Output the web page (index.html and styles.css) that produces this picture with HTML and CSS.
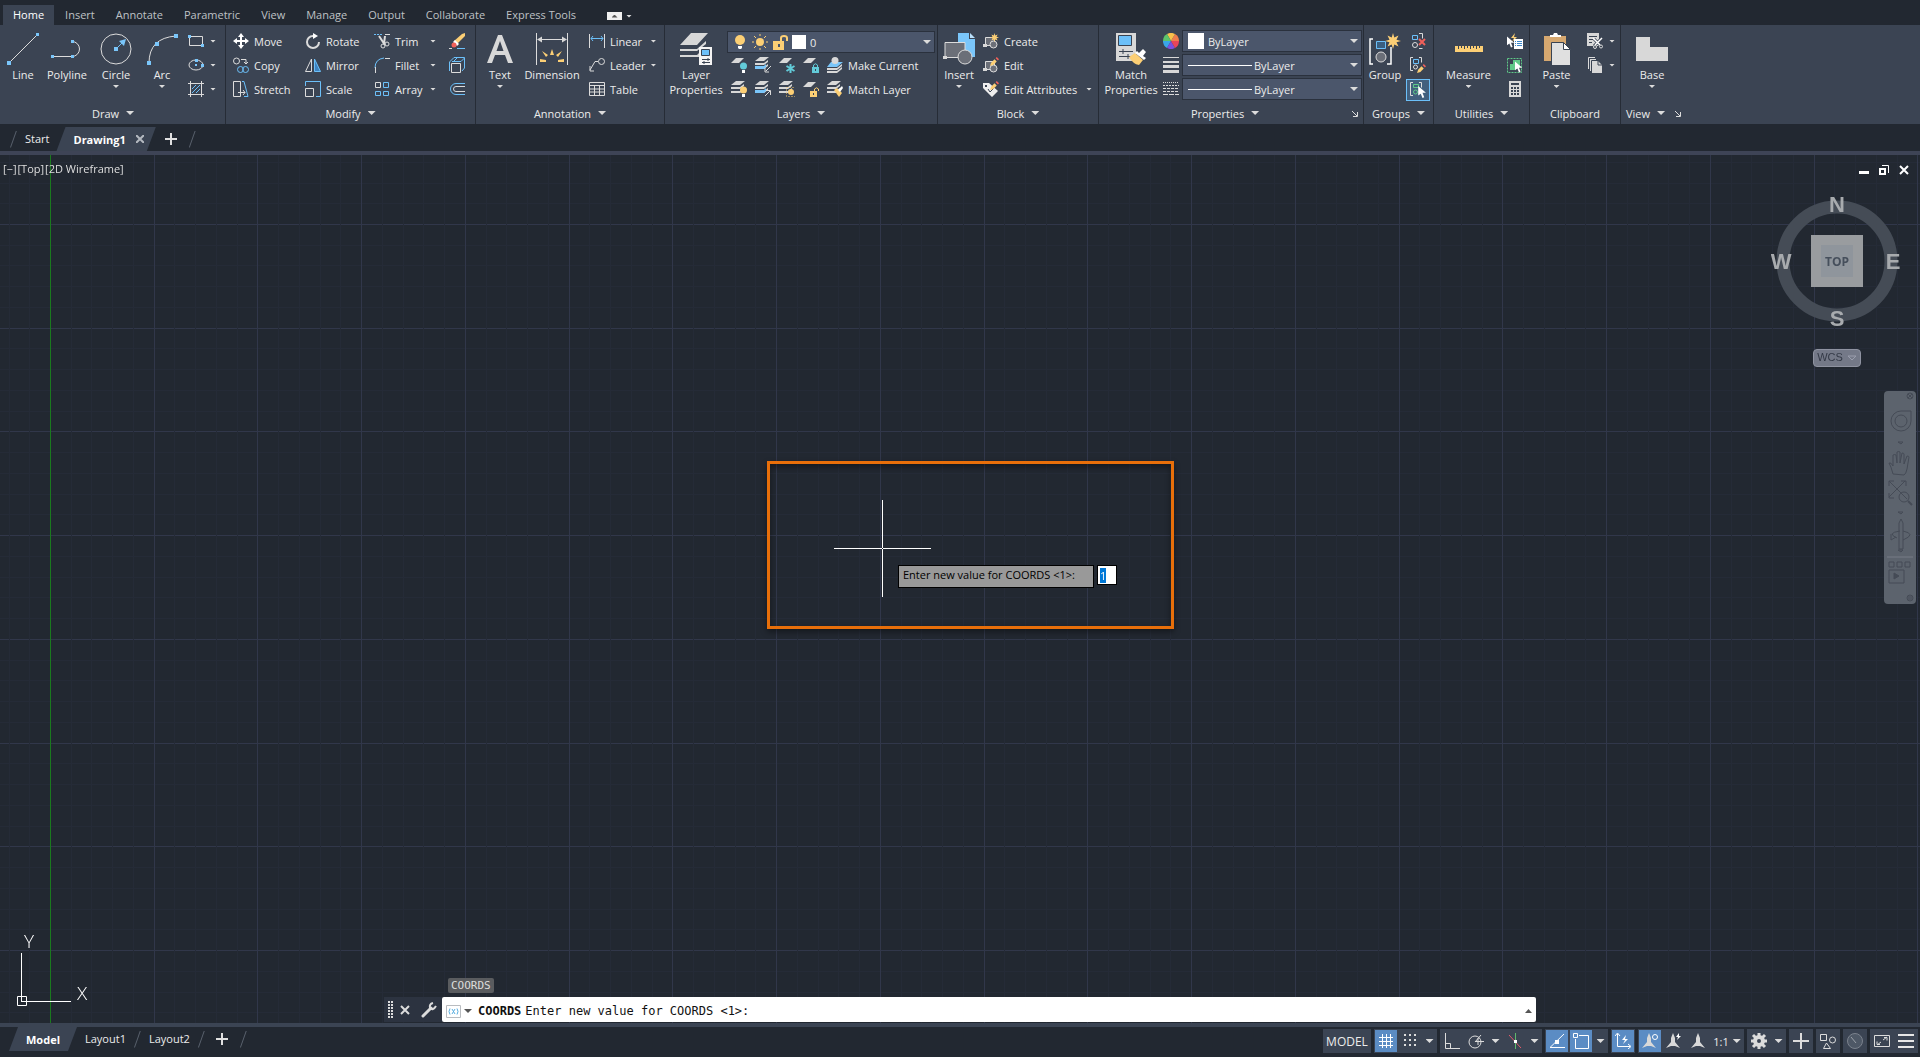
FILE: index.html
```
<!DOCTYPE html>
<html lang="en">
<head>
  <meta charset="UTF-8">
  <meta name="viewport" content="width=device-width, initial-scale=1.0">
  <title>Drawing1</title>
  <link rel="stylesheet" href="styles.css">
</head>
<body>
  <!-- Shared icon parts -->
  <svg class="defs" width="0" height="0" aria-hidden="true">
    <symbol id="slab" viewBox="0 0 16 16"><path class="fg" d="M5 1h8L8 6H0z"/></symbol>
    <symbol id="stack" viewBox="0 0 16 16"><path class="fg" d="M5 0h9L9 4H0zM0 6h9l4-3v2L9 8H0zM0 10h9l4-3v2l-4 3H0z"/></symbol>
    <symbol id="pointer" viewBox="0 0 10 14"><path fill="#fff" d="M0 0v11l3-2 2 5 2-1-2-5h4z"/></symbol>
    <symbol id="pencil" viewBox="0 0 8 8"><path class="yw" d="M0 8l1-3 3-3 2 2-3 3z"/><path class="rd" d="M5 1l1-1 2 2-1 1z"/></symbol>
    <symbol id="star" viewBox="0 0 16 16"><path class="yw" d="M8 0l1.300 4.500L13.500 2.500 11.500 6.700 16 8l-4.500 1.300 2 4.200-4.200-2L8 16l-1.300-4.500-4.200 2 2-4.200L0 8l4.500-1.300-2-4.200 4.200 2z"/></symbol>
    <symbol id="blockpart" viewBox="0 0 16 16"><path class="ln dim" d="M2.500 4.500h9v8h-9z"/><path class="fg" d="M0 11h4v3H0z"/><circle class="ln dim" cx="10.500" cy="11.500" r="3.500"/></symbol>
    <symbol id="compass" viewBox="0 0 16 16"><path class="fg" d="M8 0l2 5v4l5 6-5-2H6l-5 2 5-6V5z"/></symbol>
  </svg>

  <header>
    <nav class="menu">
      <a class="active" href="#">Home</a>
      <a href="#">Insert</a>
      <a href="#">Annotate</a>
      <a href="#">Parametric</a>
      <a href="#">View</a>
      <a href="#">Manage</a>
      <a href="#">Output</a>
      <a href="#">Collaborate</a>
      <a href="#">Express Tools</a>
      <button class="ribbon-toggle" aria-label="Minimize ribbon"><span><i class="up"></i></span><i class="caret"></i></button>
    </nav>

    <div class="ribbon">
      <!-- Draw -->
      <section class="panel draw">
        <div class="body">
          <button class="big"><svg viewBox="0 0 32 32"><path class="ln" d="M2 30L30 2"/><path class="bl" d="M0 28h4v4H0zM29 0h3v3h-3z"/></svg>Line</button>
          <button class="big"><svg viewBox="0 0 32 32"><path class="ln" d="M2 23.500h19a7 7 0 0 0 0-15"/><path class="bl" d="M0 22h3v3H0zM20 22h3v3h-3zM20 7h3v3h-3z"/></svg>Polyline</button>
          <button class="big"><svg viewBox="0 0 32 32"><circle class="ln" cx="16" cy="16" r="15"/><path class="lb" d="M16 16l8-8"/><path class="bl" d="M14 14h4v4h-4zM19 8l7-2-2 7z"/></svg>Circle<i class="caret"></i></button>
          <button class="big"><svg viewBox="0 0 32 32"><path class="ln" d="M3 30Q3 5 30 3"/><path class="bl" d="M1 28h4v4H1zM28 1h4v4h-4zM9 9h4v4H9z"/></svg>Arc<i class="caret"></i></button>
          <div class="rows">
            <button class="small" aria-label="Rectangle"><svg viewBox="0 0 16 16"><path class="ln" d="M1.500 3.500h13v9h-13z"/><path class="bl" d="M0 2h3v3H0zM13 11h3v3h-3z"/></svg><i class="caret"></i></button>
            <button class="small" aria-label="Ellipse"><svg viewBox="0 0 16 16"><ellipse class="ln" cx="8" cy="8" rx="7" ry="5"/><path class="bl" d="M7 2h3v3H7zM7 7h2v2H7zM13 7h3v3h-3z"/></svg><i class="caret"></i></button>
            <button class="small" aria-label="Hatch"><svg viewBox="0 0 16 16"><path class="ln" d="M0 2.500h16M0 13.500h16M2.500 0v16M13.500 0v16"/><path class="lb" d="M4 8l4-4M4 12l8-8M8 12l4-4"/></svg><i class="caret"></i></button>
          </div>
        </div>
        <h2>Draw<i class="caret wide"></i></h2>
      </section>

      <!-- Modify -->
      <section class="panel modify">
        <div class="body">
          <button class="small"><svg viewBox="0 0 16 16"><path fill="#fff" d="M8 0l3 4H9v3h3V5l4 3-4 3V9H9v3h2l-3 4-3-4h2V9H4v2L0 8l4-3v2h3V4H5z"/></svg>Move</button>
          <button class="small"><svg viewBox="0 0 16 16"><path class="ln thick" d="M9 3H8a6 6 0 1 0 6 6"/><path fill="#fff" d="M8 0l5 3-5 3z"/></svg>Rotate</button>
          <button class="small"><svg viewBox="0 0 16 16"><path class="lb" stroke-dasharray="2 1" d="M0 1.500h9"/><path class="ln" d="M11 1.500h5"/><path class="ln thick" d="M5 3l6 9M11 3l-1 8"/><circle class="ln" cx="9" cy="13" r="2"/><circle class="ln" cx="13" cy="11" r="2"/></svg>Trim<i class="caret"></i></button>
          <button class="small" aria-label="Erase"><svg viewBox="0 0 16 16"><path class="yw" d="M5 8l8-7 3-1v3l-8 8z"/><path fill="#fff" d="M4 9l2-2 4 4-2 2z"/><circle class="rd" cx="5" cy="12" r="2.500"/><path class="ln" d="M0 15.500h3"/><path class="lb" d="M8 15.500h8"/></svg></button>

          <button class="small"><svg viewBox="0 0 16 16"><circle class="ln" cx="3.500" cy="4" r="3"/><path class="ln" d="M8 2.500h5v4M11 5l2 2 2-2"/><circle class="lb" cx="7.500" cy="12.500" r="3"/><circle class="lb" cx="12.500" cy="12.500" r="3"/></svg>Copy</button>
          <button class="small"><svg viewBox="0 0 16 16"><path class="ln" d="M6.500 2v12.500h-6z"/><path class="lb fill" d="M9.500 2v12.500h6z"/></svg>Mirror</button>
          <button class="small"><svg viewBox="0 0 16 16"><path class="lb" d="M1 11q0-9 9-10"/><path class="ln" d="M11 1.500h5M1.500 10v6"/></svg>Fillet<i class="caret"></i></button>
          <button class="small" aria-label="Explode"><svg viewBox="0 0 16 16"><path class="ln" d="M2.500 6.500h9v9h-9z"/><path class="lb" d="M.500 14V5L5 .500h10.500V11L13 14M3 4.500h9L15.500 1M8 1L5 4"/></svg></button>

          <button class="small"><svg viewBox="0 0 16 16"><path class="ln" d="M.5.500h7v15h-7zM5 11.500h7M10 9l2 2.500-2 2.500"/><path class="lb" d="M9 .500h2l4 15h-4"/></svg>Stretch</button>
          <button class="small"><svg viewBox="0 0 16 16"><path class="lb" d="M.500 5V.500h15v15H11"/><path class="ln" d="M.500 7.500h8v8h-8z"/></svg>Scale</button>
          <button class="small"><svg viewBox="0 0 16 16"><path class="ln" d="M1.500 1.500h5v5h-5z"/><path class="lb" d="M9.500 1.500h5v5h-5zM1.500 10.500h5v4h-5zM9.500 10.500h5v4h-5z"/></svg>Array<i class="caret"></i></button>
          <button class="small" aria-label="Offset"><svg viewBox="0 0 16 16"><path class="lb" d="M16 2.500H7a5.500 5.500 0 0 0 0 11h9"/><path class="ln" d="M16 5.500H7a2.500 2.500 0 0 0 0 5h9"/></svg></button>
        </div>
        <h2>Modify<i class="caret wide"></i></h2>
      </section>

      <!-- Annotation -->
      <section class="panel annotation">
        <div class="body">
          <button class="big"><svg viewBox="0 0 32 32"><path class="fg" fill-rule="evenodd" d="M3 30L14 2h4l11 28h-5l-3-8H11l-3 8zM12.500 18h7L16 8z"/></svg>Text<i class="caret"></i></button>
          <button class="big"><svg viewBox="0 0 32 32"><path class="ln" d="M.500 0v32M31.500 0v32M2 6.500h28"/><path class="fg" d="M1 6.500l5-3v6zM31 6.500l-5-3v6z"/><path class="yw" d="M16 16l2 6h-4zM6 18l6 4-2 2zM26 18l-6 4 2 2zM4 26l6 1v2H4zM28 26l-6 1v2h6z"/></svg>Dimension</button>
          <div class="rows">
            <button class="small"><svg viewBox="0 0 16 16"><path class="ln" d="M.500 1v14M15.500 1v14"/><path class="lb" d="M2 5.500h12M4 3L2 5.500 4 8M12 3l2 2.500L12 8"/></svg>Linear<i class="caret"></i></button>
            <button class="small"><svg viewBox="0 0 16 16"><circle class="ln" cx="12.500" cy="4.500" r="3"/><path class="ln" d="M9 4.500H6L1 13M1 9v5h4"/></svg>Leader<i class="caret"></i></button>
            <button class="small"><svg viewBox="0 0 16 16"><path class="ln" d="M.500 1.500h15v13H.500zM.500 4.500h15M.500 8h15M.500 11h15M5.500 4.500v10M10.500 4.500v10"/></svg>Table</button>
          </div>
        </div>
        <h2>Annotation<i class="caret wide"></i></h2>
      </section>

      <!-- Layers -->
      <section class="panel layers">
        <div class="body">
          <button class="big"><svg viewBox="0 0 32 32"><path class="fg" d="M11 0h17L17 12H0zM0 16h17l9-8v3l-9 7H0zM0 22h17l3-3v5H0z"/><path fill="#f4f4f4" d="M19 14h13v18H19z"/><path fill="#6cc0f9" stroke="#394352" d="M21.500 16.500h8v6h-8z"/><path stroke="#394352" fill="none" d="M22 26.500h8M22 29.500h8M28 25v3M24 28v3"/></svg>Layer<br>Properties</button>
          <div class="rows">
            <div class="combo">
              <svg viewBox="0 0 16 16"><circle class="yw" cx="8" cy="6" r="5"/><path fill="#fff" d="M6 12h4v2l-1 1H7l-1-1z"/></svg>
              <svg viewBox="0 0 16 16"><circle class="yw" cx="8" cy="8" r="4"/><path stroke="#fccf75" fill="none" d="M8 0v2M8 14v2M0 8h2M14 8h2M2 2l2 2M12 12l2 2M14 2l-2 2M4 12l-2 2"/></svg>
              <svg viewBox="0 0 16 16"><path class="yw" fill-rule="evenodd" d="M1 7h11v9H1zM6 10v3h2v-3z"/><path fill="none" stroke="#fccf75" stroke-width="2" d="M9 7V4q0-2 3-2t3 2v3"/></svg>
              <i class="swatch"></i>
              <select aria-label="Layer"><option>0</option></select>
              <i class="caret wide"></i>
            </div>
            <div class="icons">
              <button aria-label="Off"><svg viewBox="0 0 16 16"><use href="#slab"/><circle class="cy" cx="12.500" cy="9" r="3.500"/><path fill="#fff" d="M11 13h3v3h-3z"/></svg></button>
              <button aria-label="Isolate"><svg viewBox="0 0 16 16"><use href="#stack"/><path class="bl" d="M0 9h9l2-2v3l-2 2H0z"/><path class="ln" d="M16 9l-5 5M10 11v4h4"/></svg></button>
              <button aria-label="Freeze"><svg viewBox="0 0 16 16"><use href="#slab"/><path fill="none" stroke="#62cbd9" stroke-width="2" d="M11.500 7v9M7.500 9l8 5M15.500 9l-8 5"/></svg></button>
              <button aria-label="Lock"><svg viewBox="0 0 16 16"><use href="#slab"/><path class="cy" fill-rule="evenodd" d="M9 10h7v6H9zM12 12v2h1v-2z"/><path fill="none" stroke="#62cbd9" d="M10.500 10V8q2-2.500 4 0v2"/></svg></button>
              <button class="label"><svg viewBox="0 0 16 16"><path class="fg" d="M0 14h10l5-4v2l-5 4H0zM0 11h10l5-4v2l-5 4H0z"/><path class="bl" d="M4 5h12l-6 5H0z"/><circle class="fg" cx="8" cy="3.500" r="3.500"/></svg>Make Current</button>
            </div>
            <div class="icons">
              <button aria-label="Turn all on"><svg viewBox="0 0 16 16"><use href="#stack"/><circle class="yw" cx="12.500" cy="9" r="3.500"/><path fill="#fff" d="M11 13h3v3h-3z"/></svg></button>
              <button aria-label="Unisolate"><svg viewBox="0 0 16 16"><use href="#stack"/><path class="bl" d="M0 9h9l2-2v3l-2 2H0z"/><path class="ln" d="M10 15l5-5M11 9.500h4.500V14"/></svg></button>
              <button aria-label="Thaw all"><svg viewBox="0 0 16 16"><use href="#stack"/><circle class="yw" cx="12" cy="11" r="3"/><path fill="none" stroke="#fccf75" stroke-dasharray="1 2" d="M7.500 6.500h9v9h-9z"/></svg></button>
              <button aria-label="Unlock"><svg viewBox="0 0 16 16"><use href="#slab"/><path class="yw" fill-rule="evenodd" d="M7 10h7v6H7zM10 12v2h1v-2z"/><path fill="none" stroke="#fccf75" d="M11.500 10V8q2-2.500 4 0v2"/></svg></button>
              <button class="label"><svg viewBox="0 0 16 16"><use href="#stack"/><path class="yw" d="M7 9l3-2 5 5-3 4z"/><path fill="#fff" d="M11 9l4-4 1 2-3 4z"/></svg>Match Layer</button>
            </div>
          </div>
        </div>
        <h2>Layers<i class="caret wide"></i></h2>
      </section>

      <!-- Block -->
      <section class="panel block">
        <div class="body">
          <button class="big"><svg viewBox="0 0 32 32"><path class="bl" d="M15 0h11v6h6v18H15z"/><path fill="#b9e0fb" d="M27 0l5 5h-5z"/><path class="ln dim" d="M2 9.500h20v15H2z"/><path class="fg" d="M0 23h4v3H0z"/><circle class="ln dim" cx="22" cy="24" r="7"/></svg>Insert<i class="caret"></i></button>
          <div class="rows">
            <button class="small"><svg viewBox="0 0 16 16"><use href="#blockpart"/><use href="#star" x="7" y="0" width="9" height="9"/></svg>Create</button>
            <button class="small"><svg viewBox="0 0 16 16"><use href="#blockpart"/><use href="#pencil" x="7" y="0" width="9" height="9"/></svg>Edit</button>
            <button class="small"><svg viewBox="0 0 16 16"><path fill="#eee" fill-rule="evenodd" d="M0 2h6l9 8-6 6-9-9zM2 4v2h2V4z"/><path stroke="#394352" fill="none" d="M5 8l2 3 5-5"/><use href="#pencil" x="7" y="0" width="9" height="9"/></svg>Edit Attributes<i class="caret"></i></button>
          </div>
        </div>
        <h2>Block<i class="caret wide"></i></h2>
      </section>

      <!-- Properties -->
      <section class="panel properties">
        <div class="body">
          <button class="big"><svg viewBox="0 0 32 32"><path class="fg" d="M1 0h20v28H1z"/><path fill="#6cc0f9" stroke="#394352" d="M3.500 2.500h13v10h-13z"/><path stroke="#394352" fill="none" d="M4 18.500h14M4 23.500h14M8 16v5M13 21v5"/><path class="yw" d="M14 24l6-4 8 7-4 5q-6-1-10-8z"/><path fill="#fff" d="M20 20l2-2 2 2 4-4 3 3-3 4 3 2-2 2z"/></svg>Match<br>Properties</button>
          <div class="rows">
            <div class="field">
              <svg viewBox="0 0 16 16"><path fill="#ef7d4c" d="M8 8L16 8A8 8 0 0 0 12 1z"/><path fill="#f8c04c" d="M8 8l4-7a8 8 0 0 0-8 0z"/><path fill="#5cc46a" d="M8 8L4 1a8 8 0 0 0-4 7z"/><path fill="#3aa5e8" d="M8 8H0a8 8 0 0 0 4 7z"/><path fill="#7a4fe0" d="M8 8l-4 7a8 8 0 0 0 8 0z"/><path fill="#e8455a" d="M8 8l4 7a8 8 0 0 0 4-7z"/></svg>
              <div class="combo"><i class="swatch big-swatch"></i><select aria-label="Object color"><option>ByLayer</option></select><i class="caret wide"></i></div>
            </div>
            <div class="field">
              <svg viewBox="0 0 16 16"><path class="fg" d="M0 0h16v1H0zM0 4h16v2H0zM0 8h16v3H0zM0 13h16v3H0z"/></svg>
              <div class="combo"><i class="line"></i><select aria-label="Lineweight"><option>ByLayer</option></select><i class="caret wide"></i></div>
            </div>
            <div class="field">
              <svg viewBox="0 0 16 16"><path class="ln" stroke-dasharray="1 1" d="M0 1.500h16"/><path class="ln" stroke-dasharray="2 1" d="M0 4.500h16"/><path class="ln" stroke-dasharray="3 1" d="M0 7.500h16M0 10.500h16"/><path class="ln" stroke-dasharray="5 1" d="M0 13.500h16"/></svg>
              <div class="combo"><i class="line"></i><select aria-label="Linetype"><option>ByLayer</option></select><i class="caret wide"></i></div>
            </div>
          </div>
        </div>
        <h2>Properties<i class="caret wide"></i><button class="launcher" aria-label="Properties palette"><svg viewBox="0 0 6 6"><path class="ln" d="M0 0l5 5M5.500 1v4.500H1"/></svg></button></h2>
      </section>

      <!-- Groups -->
      <section class="panel groups">
        <div class="body">
          <button class="big"><svg viewBox="0 0 32 32"><path fill="none" stroke="#fff" stroke-width="1.500" d="M4 6H1v25h3M18 31h4V14"/><path fill="#3a5f80" stroke="#6cc0f9" d="M7.500 8.500h9v7h-9z"/><circle class="ln dim" cx="12" cy="24" r="5"/><use href="#star" x="16" y="0" width="16" height="16"/></svg>Group</button>
          <div class="rows">
            <button class="small" aria-label="Ungroup"><svg viewBox="0 0 16 16"><path class="lb" d="M2.500 2.500h5v4h-5z"/><circle class="ln" cx="5" cy="12" r="2.500"/><path class="ln" d="M9 .500h3.500v5M9 15.500h3.500"/><path fill="none" stroke="#f1605a" stroke-width="2" d="M9 6l6 6M15 6l-6 6"/></svg></button>
            <button class="small" aria-label="Group edit"><svg viewBox="0 0 16 16"><path class="ln" d="M3 .500H.500v13H3M9 .500h2.500v5"/><path class="lb" d="M3.500 2.500h5v4h-5z"/><circle class="ln" cx="5.500" cy="10" r="2"/><use href="#pencil" x="7" y="7" width="9" height="9"/></svg></button>
            <button class="small on" aria-label="Group selection"><svg viewBox="0 0 16 16"><path class="ln" d="M3 .500H.500v13H3M9 .500h2.500v5"/><path class="lg" d="M3.500 2.500h5v3h-5z"/><circle class="lg" cx="5.500" cy="10" r="2"/><use href="#pointer" x="8" y="4" width="9" height="12"/></svg></button>
          </div>
        </div>
        <h2>Groups<i class="caret wide"></i></h2>
      </section>

      <!-- Utilities -->
      <section class="panel utilities">
        <div class="body">
          <button class="big"><svg viewBox="0 0 32 32"><path class="yw" d="M2 13h28v6H2z"/><path stroke="#394352" fill="none" d="M5.500 13v3M8.500 13v2M11.500 13v3M14.500 13v2M17.500 13v3M20.500 13v2M23.500 13v3M26.500 13v2"/></svg>Measure<i class="caret"></i></button>
          <div class="rows">
            <button class="small" aria-label="Quick select"><svg viewBox="0 0 16 16"><path class="yw" d="M8 0L4 5h3L5 9l5-5H7z"/><path fill="#fff" d="M7 6h9v10H7z"/><path fill="none" stroke="#3a86c8" d="M8 8.500h1M10 8.500h5M8 10.500h1M10 10.500h5M8 12.500h1M10 12.500h5"/><use href="#pointer" x="0" y="3" width="8" height="12"/></svg></button>
            <button class="small" aria-label="Select all"><svg viewBox="0 0 16 16"><path class="lg" stroke-dasharray="2 1" d="M.500 1.500h14v14H.500z"/><path fill="#5fc988" d="M6 3h7v7H8v3H3V7h3z"/><use href="#pointer" x="8" y="4" width="8" height="12"/></svg></button>
            <button class="small" aria-label="Calculator"><svg viewBox="0 0 16 16"><path class="fg" d="M2 0h12v16H2z"/><path fill="#394352" d="M4 2h8v2H4zM4 6h2v2H4zM7 6h2v2H7zM10 6h2v2h-2zM4 9h2v2H4zM7 9h2v2H7zM10 9h2v2h-2zM4 12h2v2H4zM7 12h2v2H7zM10 12h2v2h-2z"/></svg></button>
          </div>
        </div>
        <h2>Utilities<i class="caret wide"></i></h2>
      </section>

      <!-- Clipboard -->
      <section class="panel clipboard">
        <div class="body">
          <button class="big"><svg viewBox="0 0 32 32"><path fill="#d6a870" d="M3 3h22v25H3z"/><path fill="#fff" d="M9 4V2h3l1-2h3l1 2h3v2z"/><path fill="#e0e0e0" stroke="#394352" d="M10.500 9.500h12l7 7v16h-19z"/><path fill="#fff" stroke="#394352" d="M22.500 9.500v7h7z"/></svg>Paste<i class="caret"></i></button>
          <div class="rows">
            <button class="small" aria-label="Cut"><svg viewBox="0 0 16 16"><path class="fg" d="M0 0h12v13H0z"/><path stroke="#394352" fill="none" d="M2 3.500h8M2 6.500h4M2 9.500h3"/><path fill="none" stroke="#394352" stroke-width="3" d="M7 6l7 7M14 6l-7 7"/><path fill="none" stroke="#fff" stroke-width="1.500" d="M6 5l7 7M15 5l-7 7"/><circle class="ln" cx="8" cy="14" r="1.500"/><circle class="ln" cx="14" cy="13.500" r="1.500"/></svg><i class="caret"></i></button>
            <button class="small" aria-label="Copy clip"><svg viewBox="0 0 16 16"><path class="ln" d="M1.500 12V.500H8"/><path class="fg" d="M3 2h6v3H6v9H3zM5 4h6l4 4v8H5z"/><path stroke="#394352" fill="none" d="M4.500 16V3.500h7M11 4v4h4"/></svg><i class="caret"></i></button>
          </div>
        </div>
        <h2>Clipboard</h2>
      </section>

      <!-- View -->
      <section class="panel view">
        <div class="body">
          <button class="big"><svg viewBox="0 0 32 32"><path class="fg" d="M0 4h14v10h18v14H0z"/></svg>Base<i class="caret"></i></button>
        </div>
        <h2>View<i class="caret wide"></i><button class="launcher" aria-label="View settings"><svg viewBox="0 0 6 6"><path class="ln" d="M0 0l5 5M5.500 1v4.500H1"/></svg></button></h2>
      </section>
    </div>

    <nav class="tabs files">
      <i class="slash"></i>
      <a href="#">Start</a>
      <a class="active" href="#">Drawing1 <svg viewBox="0 0 8 8"><path fill="none" stroke="#b4b9c0" stroke-width="2" d="M0 0l8 8M8 0L0 8"/></svg></a>
      <button class="plus" aria-label="New drawing"></button>
      <i class="slash"></i>
    </nav>
  </header>

  <main id="viewport">
    <canvas id="grid"></canvas>

    <div class="view-label"><button>[−]</button><button>[Top]</button><button>[2D Wireframe]</button></div>

    <div class="win-controls">
      <button aria-label="Minimize"><svg viewBox="0 0 10 10"><path fill="#fff" d="M0 6h10v3H0z"/></svg></button>
      <button aria-label="Restore"><svg viewBox="0 0 10 10"><path fill="none" stroke="#fff" stroke-width="2" d="M1 4h5v5H1z"/><path fill="none" stroke="#fff" d="M3 .500h6.500V8"/></svg></button>
      <button aria-label="Close"><svg viewBox="0 0 10 10"><path fill="none" stroke="#fff" stroke-width="2" d="M1 1l8 8M9 1L1 9"/></svg></button>
    </div>

    <div class="viewcube">
      <svg viewBox="0 0 132 132">
        <circle cx="66" cy="66" r="54" fill="none" stroke="#454c56" stroke-width="13"/>
        <path fill="#999c9f" d="M40 40h52v52H40z"/>
        <path fill="#8f959c" d="M50 50h32v32H50z"/>
        <g class="dirs"><text x="66" y="17">N</text><text x="66" y="131">S</text><text x="10" y="74">W</text><text x="122" y="74">E</text></g>
        <text class="face" x="66" y="71">TOP</text>
      </svg>
      <button class="wcs">WCS<svg viewBox="0 0 10 6"><path fill="none" stroke="#9a9ead" d="M1 1h8L5 5z"/></svg></button>
    </div>

    <div class="navbar">
      <svg viewBox="0 0 32 213">
        <g fill="none" stroke="#454b56">
          <circle cx="26" cy="5" r="3"/><path d="M24 3l4 4M28 3l-4 4"/>
          <path d="M17 20h10v10a10 10 0 1 1-10-10z"/><circle cx="17" cy="30" r="6"/>
          <path d="M14 51h5l-2 2z"/>
          <path d="M9 83q-2-8-4-11 2-1 4 3V64q2-1 3 0l1 8V61q2-1 3 0v11l2-10q2 0 2 1v10l3-8q2 0 2 1l-2 12q-1 5-3 6z"/>
          <path d="M5 90l18 18M21 90L5 106M5 95v-5h5M17 90h5v5M5 102v5h5"/><circle cx="20" cy="106" r="5"/><path stroke-width="2" d="M24 110l4 4"/>
          <path d="M14 121h5l-2 2z"/>
          <path d="M15 132l2-4 2 4v26h-4zM13 147q-11-5 3-7M19 140q14 3 0 9M7 143v6M7 149l5-3"/>
          <path d="M14 159h5l-2 2z"/><path d="M3 166h26" stroke="#767c87"/>
          <path d="M5 171h5v5H5zM13 171h5v5h-5zM21 171h5v5h-5zM5 179h15v13H5z"/><path fill="#454b56" d="M10 182l5 3-5 3z"/>
          <circle cx="26" cy="207" r="3"/><path d="M24 206h4M24 208h4"/>
        </g>
      </svg>
    </div>

    <div class="highlight"></div>
    <svg class="crosshair" viewBox="0 0 97 97"><path fill="none" stroke="#fff" d="M48.500 0v48M48.500 49v48M0 48.500h48M49 48.500h48"/></svg>
    <div class="prompt">
      <label for="coords">Enter new value for COORDS &lt;1&gt;:</label>
      <input id="coords" type="text" value="1">
    </div>

    <svg class="ucs" viewBox="0 0 90 80">
      <path fill="none" stroke="#fff" d="M8.500 23v49M8 71.500h50M4.500 66.500h9v9h-9z"/>
      <text x="11" y="18">Y</text><text x="64" y="70">X</text>
    </svg>

    <div class="command">
      <span class="tag">COORDS</span>
      <div class="grip">
        <svg viewBox="0 0 5 18"><path stroke="#dcdcdc" stroke-width="5" stroke-dasharray="2 1" d="M2.500 0v18"/><path stroke="#2c3340" d="M2.500 0v18"/></svg>
        <button aria-label="Close command line"><svg viewBox="0 0 10 10"><path fill="none" stroke="#dcdcdc" stroke-width="2" d="M1 1l8 8M9 1L1 9"/></svg></button>
        <button aria-label="Customize"><svg viewBox="0 0 16 16"><path fill="none" stroke="#dcdcdc" stroke-width="3" stroke-linecap="round" d="M2 14l8-8"/><path fill="none" stroke="#dcdcdc" stroke-width="2" d="M12 1q-4 1-3 5 3 3 6-2"/></svg></button>
      </div>
      <div class="line-box">
        <svg class="cmd-icon" viewBox="0 0 15 13"><path fill="none" stroke="#b9bcc0" d="M.500.500h14v12H.500z"/><path fill="none" stroke="#58aee0" d="M4 3.500q-2 3 0 6M6 4l3 5M9 4L6 9M11 3.500q2 3 0 6"/></svg>
        <i class="caret wide"></i>
        <b>COORDS</b><span>Enter new value for COORDS &lt;1&gt;:</span>
        <i class="up"></i>
      </div>
    </div>
  </main>

  <footer>
    <nav class="tabs">
      <a class="active" href="#">Model</a>
      <a href="#">Layout1</a>
      <i class="slash"></i>
      <a href="#">Layout2</a>
      <i class="slash"></i>
      <button class="plus" aria-label="New layout"></button>
      <i class="slash"></i>
    </nav>
    <div class="status">
      <div><button class="text">MODEL</button></div>
      <div>
        <button class="on" aria-label="Grid"><svg viewBox="0 0 16 16"><path class="ln" stroke-width="1" d="M4.500 1v14M8.500 1v14M12.500 1v14M1 4.500h14M1 8.500h14M1 12.500h14"/></svg></button>
        <button aria-label="Snap"><svg viewBox="0 0 16 16"><path stroke="#dcdcdc" stroke-width="2" stroke-dasharray="2 3" d="M2 2h12M2 7h12M2 12h12"/></svg></button>
        <button class="drop" aria-label="Snap options"><i class="caret wide"></i></button>
      </div>
      <div>
        <button aria-label="Ortho"><svg viewBox="0 0 16 16"><path class="ln" d="M1.500 0v15.500H16M1.500 10.500h5v5"/></svg></button>
        <button aria-label="Polar"><svg viewBox="0 0 16 16"><circle class="ln" cx="7" cy="9" r="6"/><path class="ln" d="M7 9l6-7M7 8.500h9M10 5v7"/></svg></button>
        <button class="drop" aria-label="Polar options"><i class="caret wide"></i></button>
        <button aria-label="Isodraft"><svg viewBox="0 0 16 16"><path stroke="#e05c6c" d="M2 2l12 13"/><path stroke="#5fb96c" d="M8.500 0v16"/><path fill="#fff" d="M7 7h3v3H7z"/></svg></button>
        <button class="drop" aria-label="Isodraft options"><i class="caret wide"></i></button>
      </div>
      <div>
        <button class="on" aria-label="Tracking"><svg viewBox="0 0 16 16"><path class="ln" d="M15 1L1 14.500h15"/><path fill="#fff" d="M6 7h4v4H6z"/></svg></button>
        <button class="on" aria-label="Object snap"><svg viewBox="0 0 16 16"><path class="ln" d="M6 2.500h9.500v13h-13V6M.500.500h4v4h-4z"/></svg></button>
        <button class="drop" aria-label="Object snap options"><i class="caret wide"></i></button>
      </div>
      <div>
        <button class="on" aria-label="Dynamic UCS"><svg viewBox="0 0 16 16"><path class="ln" d="M2.500 1v12.500H15M0 3l2.500-3L5 3M13 11l3 2.500-3 2.500"/><path fill="#fff" d="M11 2L7 7h3l-2 4 5-5h-3z"/></svg></button>
      </div>
      <div>
        <button class="on" aria-label="Annotation visibility"><svg viewBox="0 0 16 16"><use href="#compass" x="-1"/><circle class="ln" cx="13" cy="4" r="2.500"/></svg></button>
        <button aria-label="Auto scale"><svg viewBox="0 0 16 16"><use href="#compass" x="-1"/><path fill="#fff" d="M13 0l-3 4h2l-1 3 4-4h-2z"/></svg></button>
        <button aria-label="Annotation scale"><svg viewBox="0 0 16 16"><use href="#compass"/></svg></button>
        <button class="scale">1:1<i class="caret wide"></i></button>
      </div>
      <div>
        <button aria-label="Workspace"><svg viewBox="0 0 16 16"><circle cx="8" cy="8" r="4" fill="none" stroke="#dcdcdc" stroke-width="4"/><path stroke="#dcdcdc" stroke-width="3" d="M8 0v3M8 13v3M0 8h3M13 8h3M2 2l3 3M11 11l3 3M14 2l-3 3M5 11l-3 3"/></svg></button>
        <button class="drop" aria-label="Workspace options"><i class="caret wide"></i></button>
      </div>
      <div><button aria-label="Annotation monitor"><svg viewBox="0 0 16 16"><path stroke="#dcdcdc" stroke-width="2" d="M8 0v16M0 8h16"/></svg></button></div>
      <div><button aria-label="Isolate objects"><svg viewBox="0 0 16 16"><path class="ln" d="M.500 1.500h6v6h-6zM6.500 10l4 5.500h-7z"/><circle class="ln" cx="12.500" cy="7" r="3"/></svg></button></div>
      <div><button aria-label="Performance"><svg viewBox="0 0 16 16"><circle cx="8" cy="8" r="7.500" fill="#4e5866" stroke="#7b828d"/><path stroke="#9aa0a8" d="M4 4l5 6"/></svg></button></div>
      <div>
        <button aria-label="Clean screen"><svg viewBox="0 0 16 16"><path class="ln" d="M.500 2.500h15v11H.500zM9 7l4-3M10 4.500h3v3M7 9l-4 3M3 8.500v3h3"/></svg></button>
        <button aria-label="Customization"><svg viewBox="0 0 16 16"><path stroke="#e6e6e6" stroke-width="2" d="M0 2h16M0 8h16M0 14h16"/></svg></button>
      </div>
    </div>
  </footer>

  <script src="script.js"></script>
</body>
</html>
```
FILE: styles.css
```
* {
  box-sizing: border-box;
  margin: 0;
  padding: 0;
}

body {
  display: flex;
  flex-direction: column;
  height: 100vh;
  overflow: hidden;
  background-color: #222831;
  color: #ececec;
  font-family: 'Open Sans', 'Segoe UI', sans-serif;
  font-size: 11px;
  line-height: 15px;
}

a {
  color: inherit;
  text-decoration: none;
}

button,
select,
input {
  background: none;
  border: none;
  color: inherit;
  font: inherit;
}

svg {
  display: block;
  flex: none;
}

.defs {
  position: absolute;
}

/* Icon colours */
.ln {
  fill: none;
  stroke: #dcdcdc;
}

.ln.thick {
  stroke-width: 2px;
}

.ln.dim {
  fill: #6b6f78;
}

.lb {
  fill: none;
  stroke: #6cc0f9;
}

.lb.fill {
  fill: #3f83c0;
}

.lg {
  fill: none;
  stroke: #5fc988;
}

.fg {
  fill: #d8d8d8;
}

.bl {
  fill: #7ac6fa;
}

.yw {
  fill: #fccf75;
}

.rd {
  fill: #f1605a;
}

.cy {
  fill: #62cbd9;
}

/* Small triangles */
.caret,
.up {
  flex: none;
  width: 6px;
  height: 3px;
  background-color: #dcdcdc;
  clip-path: polygon(0 0, 100% 0, 50% 100%);
}

.caret.wide {
  width: 8px;
  height: 4px;
}

.up {
  clip-path: polygon(0 100%, 100% 100%, 50% 0);
}

/* Menu row */
.menu {
  display: flex;
  align-items: flex-end;
  gap: 1px;
  height: 25px;
  padding-left: 3px;
}

.menu a {
  height: 20px;
  padding: 2px 10px 3px;
  color: #bfc2c6;
}

.menu a.active {
  background-color: #3b4453;
  color: #fff;
}

.ribbon-toggle {
  display: flex;
  align-items: center;
  gap: 4px;
  height: 18px;
  margin-left: 20px;
}

.ribbon-toggle span {
  display: flex;
  align-items: center;
  justify-content: center;
  width: 15px;
  height: 8px;
  background-color: #f0f0f0;
}

.ribbon-toggle .up {
  background-color: #555;
}

/* Ribbon */
.ribbon {
  display: flex;
  height: 99px;
  padding-left: 1px;
  background-color: #3b4453;
}

.panel {
  display: flex;
  flex-direction: column;
  flex: none;
  border-right: 1px solid #262c36;
}

.panel:last-child {
  border-right: none;
}

.panel .body {
  display: grid;
  align-content: start;
  height: 77px;
  padding-top: 4px;
}

.panel h2 {
  display: flex;
  align-items: center;
  justify-content: center;
  gap: 7px;
  position: relative;
  height: 22px;
  font-size: 11px;
  font-weight: normal;
}

.draw { width: 225px; }
.draw .body { grid-template-columns: 42px 46px 52px 40px 34px; padding-left: 1px; }

.modify { width: 250px; }
.modify .body { grid-template-columns: 72px 69px 62px 16px; grid-auto-rows: 24px; padding-left: 7px; }
.modify .small:nth-child(4n) { margin-left: 13px; }

.annotation { width: 189px; }
.annotation .body { grid-template-columns: 40px 64px 68px; padding-left: 4px; }
.annotation .rows { padding-left: 5px; }

.layers { width: 273px; }
.layers .body { grid-template-columns: 62px 208px; }

.block { width: 161px; }
.block .body { grid-template-columns: 42px 112px; }
.block .rows { padding-left: 3px; }

.properties { width: 265px; }
.properties .body { grid-template-columns: 64px 199px; }
.properties h2 { padding-right: 12px; }

.groups { width: 70px; }
.groups .body { grid-template-columns: 42px 24px; }

.utilities { width: 96px; }
.utilities .body { grid-template-columns: 69px 24px; }

.clipboard { width: 91px; }
.clipboard .body { grid-template-columns: 53px 32px; }

.view { width: 75px; }
.view .body { grid-template-columns: 62px; }
.view h2 { justify-content: flex-start; padding-left: 5px; }

.rows {
  display: grid;
  grid-auto-rows: 24px;
}

.big {
  display: flex;
  flex-direction: column;
  align-items: center;
  padding-top: 4px;
  white-space: nowrap;
}

.big svg {
  width: 32px;
  height: 32px;
  margin-bottom: 2px;
}

.big .caret {
  margin-top: 3px;
}

.small {
  display: flex;
  align-items: center;
  gap: 5px;
  white-space: nowrap;
}

.small svg,
.field > svg {
  width: 16px;
  height: 16px;
}

.small .caret {
  margin-left: auto;
}

.draw .rows {
  width: 34px;
  padding-left: 6px;
}

.clipboard .rows {
  width: 32px;
  padding-left: 4px;
}

.groups .small,
.utilities .small {
  justify-content: center;
}

.small.on {
  height: 22px;
  margin-top: 2px;
  border: 1px solid #6cc0f9;
  background-color: #42607e;
}

/* Drop-downs */
.combo {
  display: flex;
  align-items: center;
  gap: 4px;
  height: 22px;
  margin-top: 2px;
  padding: 0 3px 0 4px;
  border: 1px solid #2a313d;
  background-color: #4b566b;
}

.combo svg {
  width: 16px;
  height: 16px;
}

.combo select {
  flex: 1;
  min-width: 0;
  appearance: none;
  outline: none;
}

.swatch {
  width: 14px;
  height: 14px;
  background-color: #fff;
}

.big-swatch {
  width: 16px;
  height: 16px;
}

.line {
  width: 64px;
  height: 1px;
  background-color: #fff;
}

.field {
  display: flex;
  align-items: center;
  gap: 3px;
}

.field .combo {
  flex: 1;
  margin-top: 0;
  padding-left: 5px;
}

.field .line + select {
  margin-left: -2px;
}

.icons {
  display: flex;
  gap: 8px;
  padding-left: 4px;
}

.icons button {
  display: flex;
  align-items: center;
  gap: 5px;
}

.icons svg {
  width: 16px;
  height: 16px;
}

.launcher {
  position: absolute;
  right: 5px;
  bottom: 7px;
}

.launcher svg {
  width: 6px;
  height: 6px;
}

.view .launcher {
  right: 15px;
}

/* Drawing and layout tabs */
.tabs {
  display: flex;
  align-items: center;
  height: 24px;
}

.tabs a {
  padding: 4px 8px 5px;
}

.tabs a.active {
  display: flex;
  align-items: center;
  height: 24px;
  padding: 0 17px;
  background-color: #3b4453;
  clip-path: polygon(9px 0, 100% 0, calc(100% - 9px) 100%, 0 100%);
  color: #fff;
  font-weight: bold;
}

.tabs a svg {
  width: 8px;
  height: 8px;
}

.slash {
  width: 7px;
  height: 17px;
  background-color: #59616d;
  clip-path: polygon(6px 0, 7px 0, 1px 100%, 0 100%);
}

.plus {
  width: 12px;
  height: 12px;
  margin: 0 12px 0 11px;
  background: linear-gradient(#e0e0e0, #e0e0e0) center / 12px 2px no-repeat,
    linear-gradient(#e0e0e0, #e0e0e0) center / 2px 12px no-repeat;
}

.files {
  height: 27px;
  padding: 3px 0 0 10px;
}

.files a.active {
  gap: 10px;
  margin-left: -1px;
  padding: 0 12px 0 17px;
}

.files .plus {
  margin-left: 9px;
}

/* Drawing area */
main {
  flex: 1;
  position: relative;
  min-height: 0;
  border-top: 4px solid #3e4456;
  border-bottom: 4px solid #3b4453;
}

#grid {
  display: block;
  position: absolute;
  width: 100%;
  height: 100%;
}

.view-label {
  position: absolute;
  top: 6px;
  left: 3px;
  color: #dedede;
}

.view-label button + button {
  margin-left: 1px;
}

.win-controls {
  display: flex;
  gap: 10px;
  position: absolute;
  top: 10px;
  right: 11px;
}

.win-controls svg {
  width: 10px;
  height: 10px;
}

.viewcube {
  position: absolute;
  top: 40px;
  right: 17px;
  width: 132px;
  font-family: 'Liberation Sans', Arial, sans-serif;
}

.viewcube > svg {
  width: 132px;
  height: 132px;
}

.dirs {
  fill: #a8abae;
  font-size: 22px;
  font-weight: bold;
  text-anchor: middle;
}

.face {
  fill: #464f5c;
  font-family: 'Open Sans', sans-serif;
  font-size: 12px;
  font-weight: bold;
  text-anchor: middle;
}

.wcs {
  display: flex;
  align-items: center;
  justify-content: center;
  gap: 4px;
  width: 48px;
  height: 18px;
  margin: 22px auto 0;
  padding-bottom: 1px;
  border: 1px solid #8f93a1;
  border-radius: 4px;
  background-color: #747988;
  color: #343a47;
}

.wcs svg {
  width: 10px;
  height: 6px;
}

.navbar {
  position: absolute;
  top: 236px;
  right: 4px;
  width: 32px;
  border-radius: 4px;
  background-color: #5c636d;
}

.highlight {
  position: absolute;
  top: 306px;
  left: 767px;
  width: 407px;
  height: 168px;
  border: 3px solid #e86f0a;
  box-shadow: 0 3px 6px rgba(0, 0, 0, 0.4), inset 0 3px 6px rgba(0, 0, 0, 0.4);
}

.crosshair {
  position: absolute;
  top: 345px;
  left: 834px;
  width: 97px;
  height: 97px;
}

.prompt {
  display: flex;
  align-items: flex-start;
  gap: 3px;
  position: absolute;
  top: 410px;
  left: 898px;
}

.prompt label {
  width: 196px;
  height: 23px;
  padding: 1px 4px;
  border: 1px solid #000;
  background-color: #999;
  color: #000;
}

.prompt input {
  width: 20px;
  height: 20px;
  padding-left: 2px;
  border: 1px solid #000;
  outline: none;
  background-color: #fff;
  color: #000;
}

.prompt input::selection {
  background-color: #0078d7;
  color: #fff;
}

.ucs {
  position: absolute;
  left: 13px;
  bottom: 13px;
  width: 90px;
  height: 80px;
}

.ucs text {
  fill: #fff;
  font-size: 19px;
  font-weight: 300;
}

/* Command line */
.command {
  display: flex;
  position: absolute;
  left: 20%;
  right: 20%;
  bottom: 1px;
  height: 25px;
  font-family: 'DejaVu Sans Mono', monospace;
}

.tag {
  position: absolute;
  top: -19px;
  left: 64px;
  padding: 0 3px;
  border-radius: 2px;
  background-color: #5a5c5f;
  color: #dcdcdc;
}

.grip {
  display: flex;
  align-items: center;
  gap: 7px;
  width: 58px;
  padding-left: 4px;
  background-color: #2c3340;
}

.grip > svg {
  width: 5px;
  height: 18px;
}

.grip button svg {
  width: 10px;
  height: 10px;
}

.grip button:last-child svg {
  width: 16px;
  height: 16px;
  margin-left: 4px;
}

.line-box {
  display: flex;
  align-items: center;
  flex: 1;
  padding: 3px 4px 0;
  border-radius: 2px;
  background-color: #fff;
  color: #111;
  font-size: 12px;
}

.line-box .caret,
.line-box .up {
  background-color: #555;
}

.line-box .caret {
  margin: 0 6px 0 3px;
}

.line-box span {
  margin-left: 4px;
}

.line-box .up {
  width: 7px;
  height: 4px;
  margin-left: auto;
}

.cmd-icon {
  width: 15px;
  height: 13px;
}

/* Bottom bar */
footer {
  display: flex;
  justify-content: space-between;
  height: 30px;
  padding: 0 2px 0 9px;
}

.status {
  display: flex;
  gap: 3px;
  padding-top: 2px;
}

.status div {
  display: flex;
  align-items: center;
  height: 24px;
  background-color: #3b4453;
}

.status button {
  display: flex;
  align-items: center;
  justify-content: center;
  width: 24px;
  height: 22px;
}

.status .on {
  border-right: 1px solid #3b4453;
  border-left: 1px solid #3b4453;
  background-color: #5b8cc4;
}

.status .on .ln {
  stroke: #fff;
}

.status svg {
  width: 16px;
  height: 16px;
}

.status .drop {
  width: 15px;
}

.status .text {
  width: 48px;
  font-size: 12px;
}

.status .scale {
  gap: 4px;
  width: 34px;
}
```
FILE: script.js
```
const canvas = document.getElementById('grid');
const ctx = canvas.getContext('2d');
const step = 103.74 / 5;
const originX = 50;
const originY = 69;

function drawLines(origin, length, vertical) {
  const first = -Math.ceil(origin / step);
  for (let i = first; origin + i * step < length; i++) {
    const pos = Math.round(origin + i * step);
    ctx.fillStyle = i % 5 === 0 ? '#31374a' : '#252b37';
    if (vertical) {
      if (i === 0) ctx.fillStyle = '#1a7a1e';
      ctx.fillRect(pos, 0, 1, canvas.height);
    } else {
      ctx.fillRect(0, pos, canvas.width, 1);
    }
  }
}

function drawGrid() {
  canvas.width = canvas.clientWidth;
  canvas.height = canvas.clientHeight;
  drawLines(originY, canvas.height, false);
  drawLines(originX, canvas.width, true);
}

window.addEventListener('resize', drawGrid);
drawGrid();

const coords = document.getElementById('coords');
coords.focus();
coords.select();
```
